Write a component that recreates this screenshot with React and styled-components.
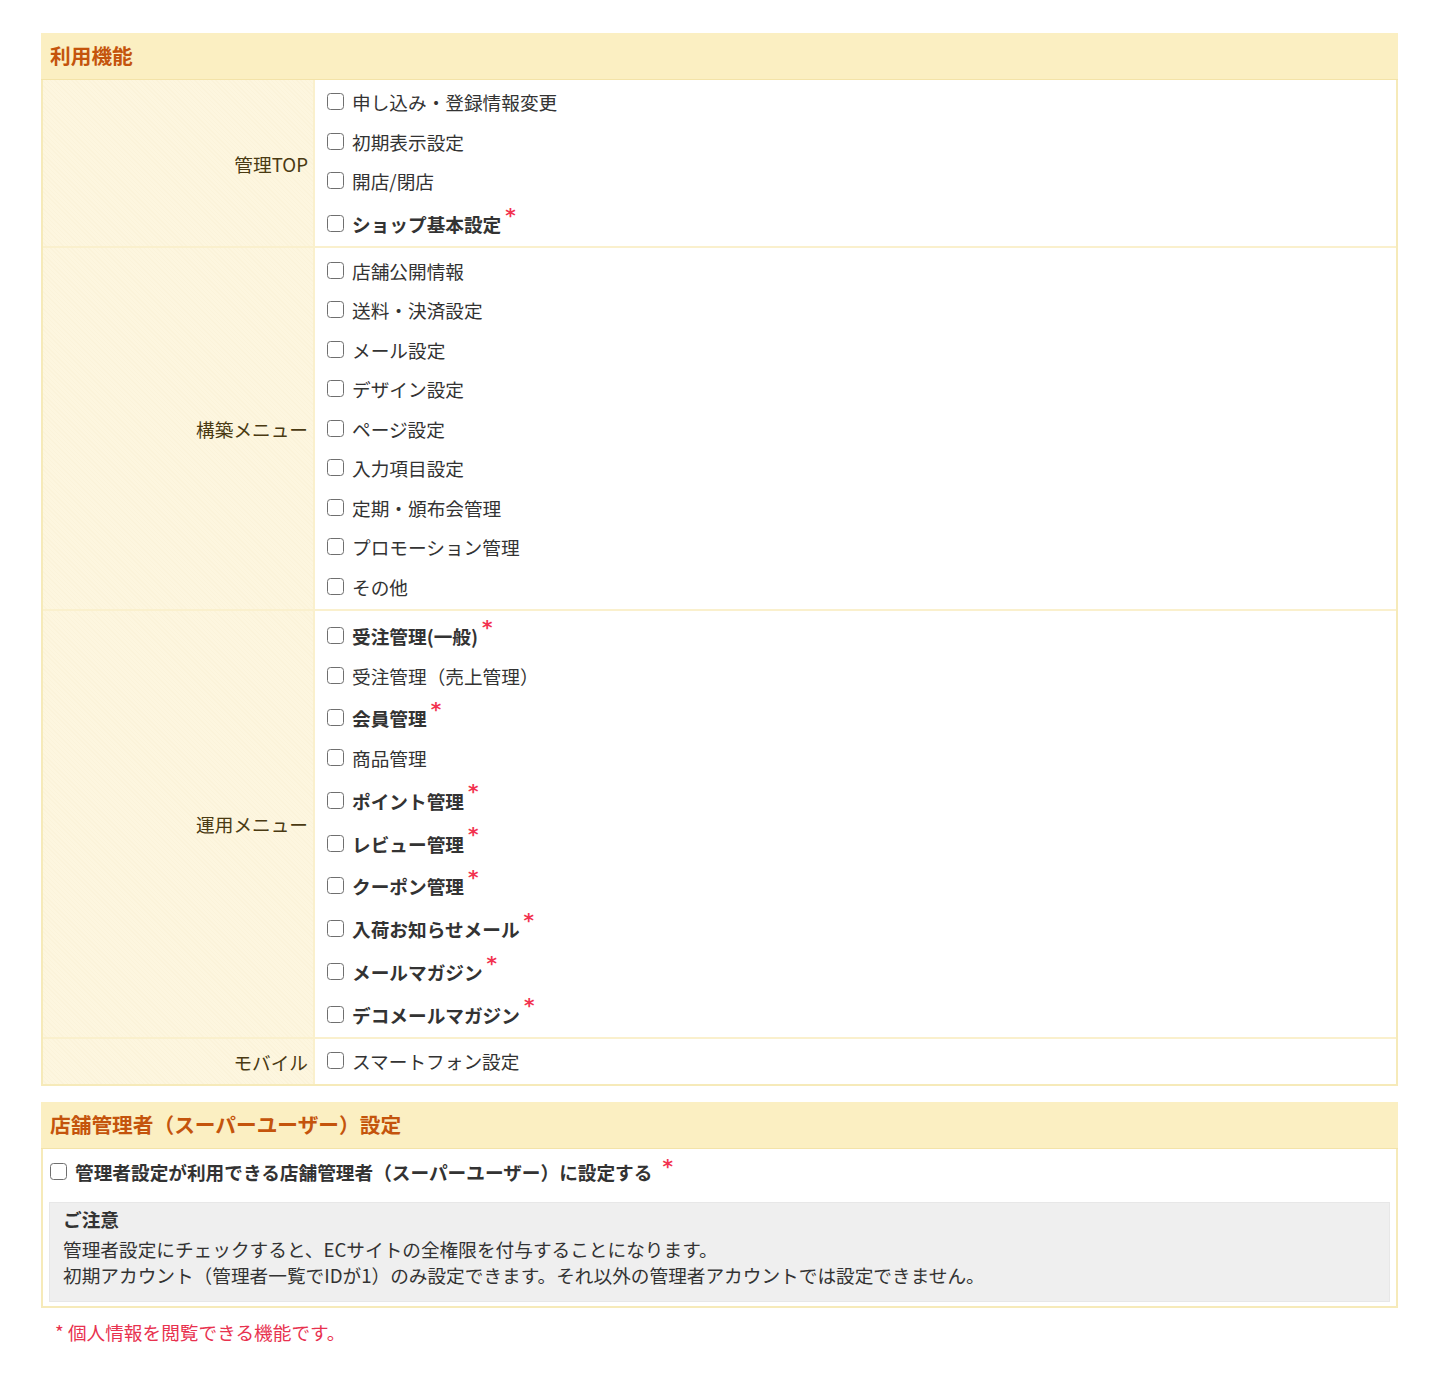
import React from "react";
import styled, { createGlobalStyle } from "styled-components";

const GlobalStyle = createGlobalStyle`
  body {
    margin: 0;
    background: #fff;
    font-family: "Noto Sans CJK JP", "Noto Sans", sans-serif;
    font-size: 18.67px;
    color: #333;
  }
`;

const groups = [
  {
    label: "管理TOP",
    items: [
      { text: "申し込み・登録情報変更" },
      { text: "初期表示設定" },
      { text: "開店/閉店" },
      { text: "ショップ基本設定", secret: true },
    ],
  },
  {
    label: "構築メニュー",
    items: [
      { text: "店舗公開情報" },
      { text: "送料・決済設定" },
      { text: "メール設定" },
      { text: "デザイン設定" },
      { text: "ページ設定" },
      { text: "入力項目設定" },
      { text: "定期・頒布会管理" },
      { text: "プロモーション管理" },
      { text: "その他" },
    ],
  },
  {
    label: "運用メニュー",
    items: [
      { text: "受注管理(一般)", secret: true },
      { text: "受注管理（売上管理）" },
      { text: "会員管理", secret: true },
      { text: "商品管理" },
      { text: "ポイント管理", secret: true },
      { text: "レビュー管理", secret: true },
      { text: "クーポン管理", secret: true },
      { text: "入荷お知らせメール", secret: true },
      { text: "メールマガジン", secret: true },
      { text: "デコメールマガジン", secret: true },
    ],
  },
  {
    label: "モバイル",
    items: [{ text: "スマートフォン設定" }],
  },
];

function App() {
  return (
    <Page>
      <GlobalStyle />
      <Section>
        <Header>利用機能</Header>
        <Table>
          {groups.map(({ label, items }) => (
            <Row key={label}>
              <Label>{label}</Label>
              <Cell>
                {items.map(({ text, secret }) => (
                  <Item key={text} $bold={secret}>
                    <Check type="checkbox" />
                    <span>{text}</span>
                    {secret && <Mark>*</Mark>}
                  </Item>
                ))}
              </Cell>
            </Row>
          ))}
        </Table>
      </Section>

      <Section $gap>
        <Header>店舗管理者（スーパーユーザー）設定</Header>
        <Body>
          <SuperRow>
            <Check type="checkbox" />
            <span>管理者設定が利用できる店舗管理者（スーパーユーザー）に設定する</span>
            <Mark $wide>*</Mark>
          </SuperRow>
          <Notice>
            <NoticeTitle>ご注意</NoticeTitle>
            <p>管理者設定にチェックすると、ECサイトの全権限を付与することになります。</p>
            <p>初期アカウント（管理者一覧でIDが1）のみ設定できます。それ以外の管理者アカウントでは設定できません。</p>
          </Notice>
        </Body>
      </Section>

      <Footnote>* 個人情報を閲覧できる機能です。</Footnote>
    </Page>
  );
}

const Page = styled.div`
  padding: 33px 42px 40px 41px;
`;

const Section = styled.section`
  margin-top: ${(p) => (p.$gap ? "16px" : "0")};
`;

const Header = styled.h2`
  margin: 0;
  height: 46px;
  line-height: 45px;
  padding: 0 9px;
  background: #fbefc2;
  border-bottom: 1px solid #f3e3a8;
  color: #c4540c;
  font-size: 20.7px;
  font-weight: 700;
`;

const Table = styled.div`
  border: 2px solid #f6eab9;
  border-top: none;
`;

const Row = styled.div`
  display: grid;
  grid-template-columns: 272px 1fr;
  & + & {
    border-top: 2px solid #faf0cd;
  }
`;

const Label = styled.div`
  display: flex;
  align-items: center;
  justify-content: flex-end;
  padding-right: 5px;
  border-right: 2px solid #faf0cd;
  background: repeating-linear-gradient(
    45deg,
    #fdf6df 0 2px,
    #fbf3da 2px 3px
  );
  color: #4a3a12;
`;

const Cell = styled.div`
  padding: 2px 12px 3px;
  background: #fff;
`;

const Item = styled.label`
  display: flex;
  align-items: center;
  height: ${(p) => (p.$bold ? "42.8px" : "39.5px")};
  padding-top: ${(p) => (p.$bold ? "3px" : "0")};
  box-sizing: border-box;
  font-weight: ${(p) => (p.$bold ? 700 : 400)};
  color: #333;
`;

const Check = styled.input`
  appearance: none;
  margin: 0 8px 0 0;
  width: 17px;
  height: 17px;
  flex-shrink: 0;
  border: 1.5px solid #6f6f6f;
  border-radius: 3.5px;
  background: #fff;
`;

const Mark = styled.span`
  align-self: flex-start;
  margin-left: ${(p) => (p.$wide ? "10px" : "4px")};
  margin-top: ${(p) => (p.$wide ? "-1px" : "1px")};
  color: #f2324f;
  font-family: "DejaVu Sans", sans-serif;
  font-size: 20px;
  font-weight: 700;
  line-height: 20px;
`;

const Body = styled.div`
  border: 2px solid #f6eab9;
  border-top: none;
  padding: 8px 6px 4px 6px;
`;

const SuperRow = styled.label`
  display: flex;
  align-items: center;
  height: 30px;
  margin-bottom: 15px;
  padding-left: 1px;
  font-weight: 700;
  color: #333;
`;

const Notice = styled.div`
  background: #efefef;
  border: 1px solid #e7e7e7;
  padding: 3px 13px 13px;
  p {
    margin: 0;
    line-height: 26px;
  }
`;

const NoticeTitle = styled.div`
  font-weight: 700;
  line-height: 26px;
  margin-bottom: 4px;
`;

const Footnote = styled.p`
  margin: 11px 0 0;
  padding-left: 14px;
  line-height: 26px;
  color: #e8324f;
`;

export default App;
